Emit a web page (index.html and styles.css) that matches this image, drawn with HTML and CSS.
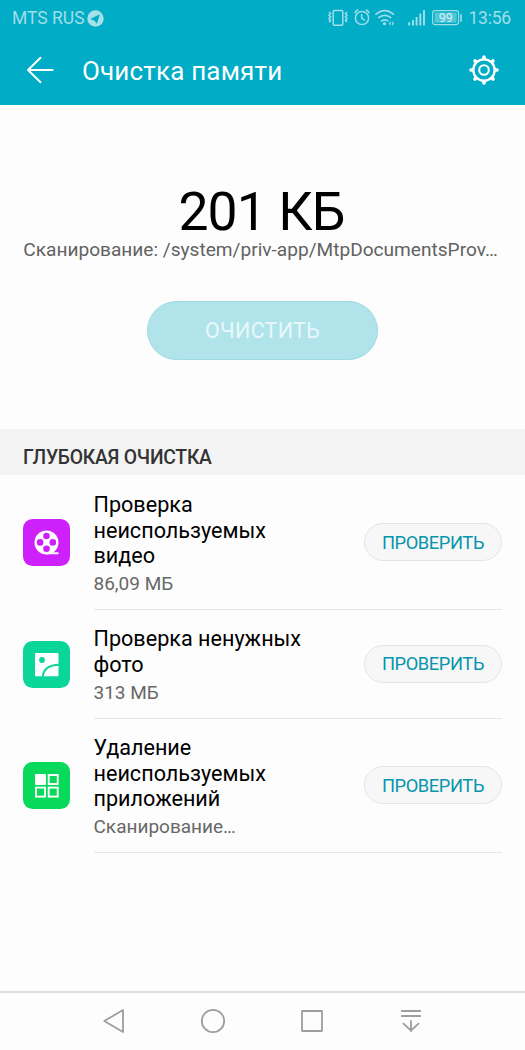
FILE: index.html
```html
<!DOCTYPE html>
<html lang="ru">
<head>
<meta charset="utf-8">
<title>Очистка памяти</title>
<link rel="stylesheet" href="styles.css">
</head>
<body>
<div class="screen">
  <header class="header">
    <div class="status">
      <span class="carrier">MTS RUS</span>
      <svg class="telegram" width="17" height="17" viewBox="0 0 17 17"><circle cx="8.5" cy="8.5" r="8.2" fill="#a6e0e9"/><path d="M3.200 9 12.800 4.200 10 13.800 7.600 10.800Z" fill="#00acc6"/></svg>
      <svg class="indicators" width="136" height="22" viewBox="328 7 136 22" fill="none" stroke="#a0dee8" stroke-width="1.5">
        <rect x="334.200" y="10.400" width="9.600" height="14.800" rx="1.200"/>
        <path d="M330 12l1.600 1.600-1.600 1.700 1.600 1.700-1.600 1.700 1.600 1.700-1.600 1.700M348 12l-1.600 1.600 1.600 1.700-1.600 1.700 1.600 1.700-1.600 1.700 1.600 1.700"/>
        <circle cx="363" cy="18" r="6.600"/><path d="M362.700 14v4.400l3.200 2M355.700 13.200q.8-2.600 3.500-3.500M370.300 13.200q-.8-2.600-3.500-3.500"/>
        <path d="M376.400 14.700q9.300-8.200 18.600 0M379.200 18q6.500-5.400 13 0M382 21.200q3.800-2.800 7.400 0" stroke-width="1.700"/>
        <circle cx="385.500" cy="23.700" r="1.600" fill="#a0dee8" stroke="none"/>
        <path d="M392 21v5l-2.300-2.500zM393 21v5l2.300-2.500z" fill="#80d3e0" stroke="none"/>
        <path d="M410.200 22.300V25.500M414 20v5.500M417.600 17v8.500M421.300 13.500v12M425 10v15.500" stroke-width="1.900"/>
        <rect x="433.600" y="10.600" width="26" height="14" rx="2.600" stroke-width="1.100"/>
        <rect x="435.500" y="12.500" width="22.200" height="10.200" rx="1" fill="#53c6d7" stroke="none"/>
        <path d="M462 14.200v7.600" stroke-width="1.600"/>
        <text class="battery" x="446.800" y="22.300" text-anchor="middle">99</text>
      </svg>
      <span class="clock">13:56</span>
    </div>
    <div class="toolbar">
      <svg width="28" height="28" viewBox="0 0 28 28" fill="none" stroke="#fff" stroke-width="2" stroke-linecap="round" stroke-linejoin="round"><path d="M14.500 1.800 2 14 14.500 26.200M2 14H26.500"/></svg>
      <h1 class="title">Очистка памяти</h1>
      <svg class="gear" width="32" height="32" viewBox="-16 -16 32 32" fill="none" stroke="#fff">
        <circle r="10.700" stroke-width="2.300"/><circle r="4.800" stroke-width="2.100"/>
        <g stroke-width="3.600" stroke-linecap="round"><path d="M0-11.700V-13M0 11.700V13M-11.700 0H-13M11.700 0H13M8.200-8.200 9-9M-8.200-8.200-9-9M8.200 8.200 9 9M-8.200 8.200-9 9"/></g>
      </svg>
    </div>
  </header>

  <main class="content">
    <section class="summary">
      <div class="size">201 КБ</div>
      <div class="path">Сканирование: /system/priv-app/MtpDocumentsProv…</div>
      <button class="clean" disabled>ОЧИСТИТЬ</button>
    </section>
    <h2 class="section">ГЛУБОКАЯ ОЧИСТКА</h2>
    <div class="list">
      <div class="row">
        <svg class="icon" viewBox="0 0 47 47"><rect class="violet" width="47" height="47" rx="9.500"/><circle cx="23.500" cy="23.500" r="12" fill="#fff"/><path d="M23.500 35.300H35.500V33.200H29" fill="#fff"/><g class="violet"><circle cx="23.500" cy="17" r="3.300"/><circle cx="23.500" cy="29.700" r="3.300"/><circle cx="17.100" cy="23.400" r="3.300"/><circle cx="29.800" cy="23.400" r="3.300"/></g></svg>
        <div class="info">
          <div class="text"><div class="name">Проверка<br>неиспользуемых<br>видео</div><div class="detail">86,09 МБ</div></div>
          <button class="check">ПРОВЕРИТЬ</button>
        </div>
      </div>
      <div class="row">
        <svg class="icon" viewBox="0 0 47 47"><rect class="mint" width="47" height="47" rx="9.500"/><rect x="12" y="12" width="23.500" height="23.200" rx="1" fill="#fff"/><circle class="mint" cx="19" cy="19" r="2.900"/><path d="M19.800 35.500C20.500 28.500 26 23.900 36 23.700" fill="none" stroke="#0bd69a" stroke-width="2"/></svg>
        <div class="info">
          <div class="text"><div class="name">Проверка ненужных<br>фото</div><div class="detail">313 МБ</div></div>
          <button class="check">ПРОВЕРИТЬ</button>
        </div>
      </div>
      <div class="row">
        <svg class="icon" viewBox="0 0 47 47"><rect class="green" width="47" height="47" rx="9.500"/><rect x="12" y="12" width="11" height="11" rx="1" fill="#fff"/><g fill="none" stroke="#fff" stroke-width="1.900"><rect x="25.700" y="13" width="9" height="9"/><rect x="13" y="25.600" width="9" height="9"/><rect x="25.700" y="25.600" width="9" height="9"/></g></svg>
        <div class="info">
          <div class="text"><div class="name">Удаление<br>неиспользуемых<br>приложений</div><div class="detail">Сканирование…</div></div>
          <button class="check">ПРОВЕРИТЬ</button>
        </div>
      </div>
    </div>
  </main>

  <nav class="nav">
    <svg viewBox="-14 -14 28 28"><path d="M-9.700 0 9 -11V11Z"/></svg>
    <svg viewBox="-14 -14 28 28"><circle r="11.200"/></svg>
    <svg viewBox="-14 -14 28 28"><rect x="-10" y="-10" width="20" height="20" rx=".5"/></svg>
    <svg viewBox="-14 -14 28 28"><path d="M-9.200-10H9.200M-9.200-5H9.200M0 0V10M-7.500 2.600 0 9.700 7.500 2.600"/></svg>
  </nav>
</div>
</body>
</html>
```
FILE: styles.css
```css
* { box-sizing: border-box; }
body { margin: 0; font-family: Roboto, sans-serif; background: #fdfdfd; color: #000; }
button { font-family: inherit; padding: 0; white-space: nowrap; }
svg { display: block; flex: none; }
.screen { height: 1050px; display: flex; flex-direction: column; }
.header { height: 105px; background: #00acc6; color: #fff; }
.status { height: 36px; padding: 0 14px 0 12px; display: flex; align-items: center; color: #a0dee8; }
.carrier { font-size: 17.5px; }
.telegram { margin-left: 2px; }
.indicators { margin-left: auto; }
.battery { font-size: 12.5px; fill: #d5f1f5; stroke: none; }
.clock { font-size: 17.5px; margin-left: 5px; letter-spacing: -.2px; }
.toolbar { height: 69px; padding: 0 25px 0 26px; display: flex; align-items: center; }
.toolbar > * { margin-bottom: 1px; }
.title { margin: 0 0 0 28px; font-size: 26px; font-weight: 400; line-height: 32px; letter-spacing: .17px; white-space: nowrap; }
.gear { margin-left: auto; }
.content { flex: 1; }
.summary { height: 324px; padding-top: 79px; display: flex; flex-direction: column; align-items: center; }
.size { margin-right: 2px; font-size: 53.5px; line-height: 56px; letter-spacing: -.9px; }
.path { margin-right: 4px; font-size: 19.1px; line-height: 20px; color: #626262; white-space: nowrap; }
.clean { width: 231px; height: 59px; margin-top: 41px; border: 1px solid #9bdae2; border-radius: 30px; background: #b0e4ea; color: #e8f8fa; font-size: 21.5px; letter-spacing: .25px; }
.section { height: 46px; margin: 0; padding: 12px 23px 0; background: #f3f3f3; color: #333; font-size: 19.3px; font-weight: 500; line-height: 34px; letter-spacing: -.22px; }
.list { padding-top: .6px; }
.row { display: flex; align-items: center; padding: 0 23px; }
.icon { width: 47px; height: 47px; }
.info { flex: 1; display: flex; justify-content: space-between; align-items: center; margin-left: 23.5px; padding: 16.5px 0 13px; border-bottom: 1px solid #e6e6e6; }
.name { font-size: 21.6px; line-height: 25.6px; white-space: nowrap; }
.detail { margin-top: 2px; font-size: 19px; line-height: 25px; color: #686868; }
.check { width: 138px; height: 38px; margin-bottom: 3px; border: 1px solid #e5e5e5; border-radius: 19px; background: #f7f7f7; color: #0695ad; font-size: 18.3px; letter-spacing: -.4px; }
.violet { fill: #cd20fb; }
.mint { fill: #0bd69a; }
.green { fill: #07d95b; }
.nav { height: 59px; padding: 0 65px 1px 64px; border-top: 2px solid #dedede; display: flex; justify-content: space-around; align-items: center; }
.nav svg { width: 28px; height: 28px; margin-bottom: 1px; fill: none; stroke: #9d9d9d; stroke-width: 1.8; stroke-linejoin: round; stroke-linecap: round; }
```
